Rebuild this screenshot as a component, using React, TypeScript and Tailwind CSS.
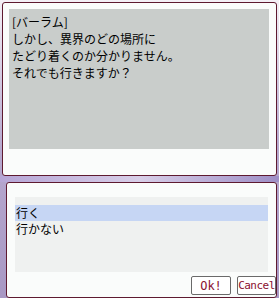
export default function App() {
  return (
    <div className="w-[279px] h-[298px] overflow-hidden bg-gradient-to-b from-[#f4f0f6] via-[#b7a9cf] to-[#a898c4] flex flex-col font-['Noto_Sans_CJK_JP','DejaVu_Sans',sans-serif]">
      <div className="mx-[2px] mt-[2px] h-[174px] border border-[#5e1a30] rounded-[3px] bg-[#fafcfb] pl-[6px] pr-[7px] pt-[6px] pb-[26px] flex">
        <div className="flex-1 bg-[#c9cdcb] px-[3px] pt-[4px] text-[12px] leading-[17px] text-black">
          <p>[バーラム]</p>
          <p>しかし、異界のどの場所に</p>
          <p>たどり着くのか分かりません。</p>
          <p>それでも行きますか？</p>
        </div>
      </div>
      <div className="h-[6px] bg-gradient-to-r from-[#b6a6d6] via-[#d8cfe8] to-[#9e8fc6]" />
      <div className="ml-[6px] mr-[2px] h-[116px] border border-[#5e1a30] rounded-[3px] bg-[#fafcfb] flex flex-col px-[8px] pt-[14px]">
        <div className="h-[75px] bg-[#eff1f0] pt-[8px] text-[12px] leading-[16px] text-black">
          <div className="bg-[#c6d6f4] px-[1px]">行く</div>
          <div className="px-[1px]">行かない</div>
        </div>
        <div className="flex justify-end gap-[6px] mt-[4px] -mr-[8px] font-['DejaVu_Sans_Mono',monospace]">
          <button className="w-[40px] h-[19px] bg-white border border-[#6a6a6a] rounded-[2px] text-[12px] leading-none text-[#8a1030]">Ok!</button>
          <button className="w-[39px] h-[19px] bg-white border border-[#6a6a6a] rounded-[2px] text-[11px] leading-none text-[#8a1030] tracking-[-0.5px]">Cancel</button>
        </div>
      </div>
    </div>
  );
}
